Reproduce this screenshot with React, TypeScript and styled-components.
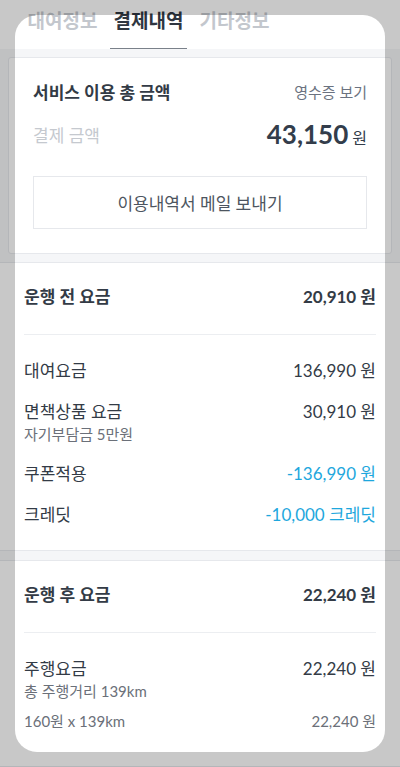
import React from "react";
import styled, { createGlobalStyle } from "styled-components";

const GlobalStyle = createGlobalStyle`
  html, body {
    margin: 0;
    padding: 0;
    background: #f5f6f8;
  }
  body {
    font-family: Lato, "Noto Sans CJK KR", sans-serif;
    color: #333b46;
    -webkit-font-smoothing: antialiased;
  }
`;

const Page = styled("div")`
  display: flex;
  flex-direction: column;
  width: 400px;
  min-height: 767px;
  background: #f5f6f8;
`;

const TabBar = styled("div")`
  display: flex;
  gap: 9px;
  padding: 0 24px;
  height: 49px;
  background: #fff;
`;

const Tab = styled("div")<{ active?: boolean }>`
  width: 77px;
  text-align: center;
  font-size: 19px;
  font-weight: 700;
  line-height: 24px;
  padding-top: 9px;
  box-sizing: border-box;
  color: ${p => (p.active ? "#2f3640" : "#c3c7cd")};
  border-bottom: 1px solid ${p => (p.active ? "#7a818a" : "transparent")};
`;

const SummaryBox = styled("div")`
  margin: 8px 8px 8px;
  padding: 21px 24px 24px;
  background: #fff;
  border: 1px solid #e6e8ec;
  border-radius: 3px;
`;

const SummaryHead = styled("div")`
  display: flex;
  justify-content: space-between;
  align-items: center;
  height: 24px;
`;

const SummaryTitle = styled("div")`
  font-size: 17px;
  font-weight: 700;
  color: #333b46;
`;

const ReceiptLink = styled("div")`
  font-size: 15px;
  color: #6b7280;
`;

const AmountRow = styled("div")`
  display: flex;
  justify-content: space-between;
  align-items: center;
  height: 36px;
  margin-top: 13px;
`;

const AmountLabel = styled("div")`
  font-size: 17px;
  color: #c5c9cf;
`;

const AmountValue = styled("div")`
  display: flex;
  align-items: baseline;
  gap: 4px;
  font-size: 26px;
  font-weight: 700;
  color: #333d4b;
`;

const Won = styled("span")`
  font-size: 16px;
  font-weight: 400;
  color: #333d4b;
`;

const MailButton = styled("div")`
  margin-top: 24px;
  height: 53px;
  display: flex;
  align-items: center;
  justify-content: center;
  border: 1px solid #e6e8ec;
  box-sizing: border-box;
  font-size: 17px;
  color: #4d5560;
`;

const Section = styled("div")<{ gapTop: number; grow?: boolean }>`
  margin-top: ${p => p.gapTop}px;
  flex: ${p => (p.grow ? 1 : "none")};
  background: #fff;
  border-top: 1px solid #e6e8ec;
  border-bottom: 1px solid #e6e8ec;
  padding: 0 24px 23px;
`;

const SectionHead = styled("div")`
  display: flex;
  justify-content: space-between;
  align-items: center;
  height: 24px;
  padding: 20px 0 27px;
  border-bottom: 1px solid #eceef1;
  font-size: 17px;
  font-weight: 700;
  color: #333b46;
`;

const Rows = styled("div")`
  display: flex;
  flex-direction: column;
  gap: 17px;
  padding-top: 24px;
`;

const Row = styled("div")`
  display: flex;
  flex-direction: column;
`;

const Line = styled("div")<{ tone?: "main" | "sub" | "detail" }>`
  display: flex;
  justify-content: space-between;
  font-size: ${p => (p.tone === "main" || !p.tone ? 17 : 15)}px;
  line-height: ${p => (p.tone === "main" || !p.tone ? 24 : 21)}px;
  color: ${p => (p.tone === "main" || !p.tone ? "#333b46" : "#6b7079")};
  margin-top: ${p => (p.tone === "detail" ? 9 : 0)}px;
`;

const Value = styled("span")<{ accent?: boolean }>`
  color: ${p => (p.accent ? "#1ea7dd" : "inherit")};
`;

const Dim = styled("div")`
  position: fixed;
  inset: 0;
  overflow: hidden;
  pointer-events: none;
`;

const Spotlight = styled("div")`
  position: absolute;
  left: 15px;
  top: 15px;
  width: 370px;
  height: 737px;
  border-radius: 22px;
  box-shadow: 0 0 0 1200px rgba(0, 0, 0, 0.215);
`;

type Item = {
  label: string;
  value: string;
  accent?: boolean;
  sub?: string;
  detail?: [string, string];
};

const beforeItems: Item[] = [
  { label: "대여요금", value: "136,990 원" },
  { label: "면책상품 요금", value: "30,910 원", sub: "자기부담금 5만원" },
  { label: "쿠폰적용", value: "-136,990 원", accent: true },
  { label: "크레딧", value: "-10,000 크레딧", accent: true },
];

const afterItems: Item[] = [
  {
    label: "주행요금",
    value: "22,240 원",
    sub: "총 주행거리 139km",
    detail: ["160원 x 139km", "22,240 원"],
  },
];

const FeeSection: React.FC<{
  title: string;
  total: string;
  items: Item[];
  gapTop: number;
  grow?: boolean;
}> = ({ title, total, items, gapTop, grow }) => (
  <Section gapTop={gapTop} grow={grow}>
    <SectionHead>
      <span>{title}</span>
      <span>{total}</span>
    </SectionHead>
    <Rows>
      {items.map(item => (
        <Row key={item.label}>
          <Line tone="main">
            <span>{item.label}</span>
            <Value accent={item.accent}>{item.value}</Value>
          </Line>
          {item.sub && (
            <Line tone="sub">
              <span>{item.sub}</span>
            </Line>
          )}
          {item.detail && (
            <Line tone="detail">
              <span>{item.detail[0]}</span>
              <span>{item.detail[1]}</span>
            </Line>
          )}
        </Row>
      ))}
    </Rows>
  </Section>
);

const App: React.FC = () => {
  return (
    <React.Fragment>
      <GlobalStyle />
      <Page>
        <TabBar>
          <Tab>대여정보</Tab>
          <Tab active>결제내역</Tab>
          <Tab>기타정보</Tab>
        </TabBar>
        <SummaryBox>
          <SummaryHead>
            <SummaryTitle>서비스 이용 총 금액</SummaryTitle>
            <ReceiptLink>영수증 보기</ReceiptLink>
          </SummaryHead>
          <AmountRow>
            <AmountLabel>결제 금액</AmountLabel>
            <AmountValue>
              43,150<Won>원</Won>
            </AmountValue>
          </AmountRow>
          <MailButton>이용내역서 메일 보내기</MailButton>
        </SummaryBox>
        <FeeSection title="운행 전 요금" total="20,910 원" items={beforeItems} gapTop={0} />
        <FeeSection title="운행 후 요금" total="22,240 원" items={afterItems} gapTop={9} grow />
      </Page>
      <Dim>
        <Spotlight />
      </Dim>
    </React.Fragment>
  );
};

export default App;
